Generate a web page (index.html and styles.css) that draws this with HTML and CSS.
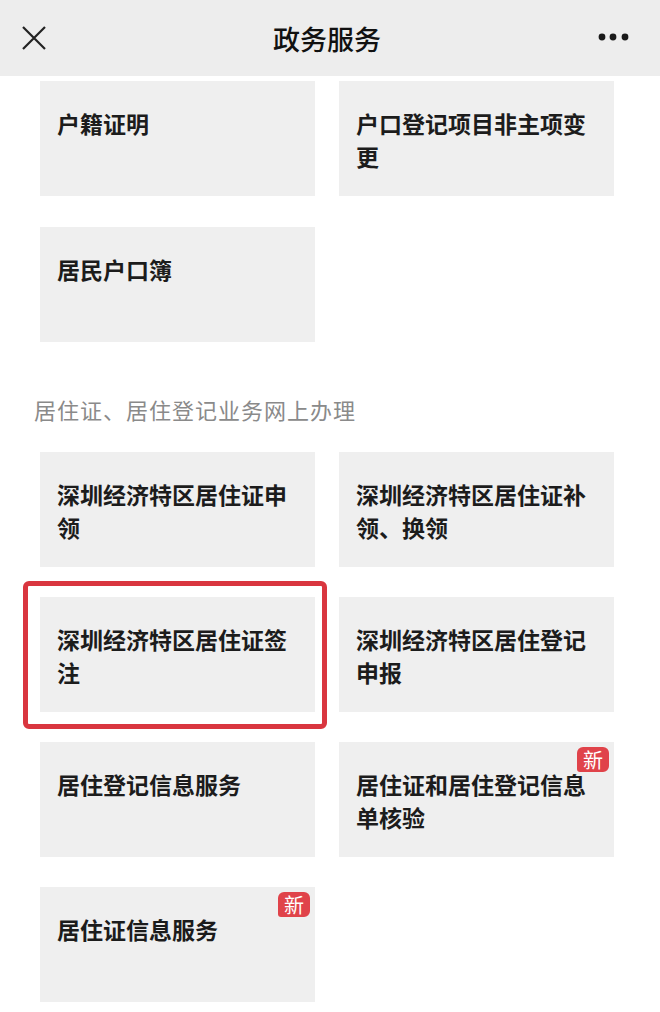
FILE: index.html
```html
<!DOCTYPE html>
<html lang="zh-CN">
<head>
<meta charset="utf-8">
<title>政务服务</title>
<link rel="stylesheet" href="styles.css">
</head>
<body>
<header class="topbar">
  <svg class="close" width="26" height="26" viewBox="0 0 26 26"><path d="M2 2 L24 24 M24 2 L2 24" stroke="#222" stroke-width="2.2" fill="none"/></svg>
  <h1 class="title">政务服务</h1>
  <svg class="more" width="34" height="10" viewBox="0 0 34 10"><circle cx="4" cy="5" r="3.4" fill="#1a1a1a"/><circle cx="15" cy="5" r="3.4" fill="#1a1a1a"/><circle cx="27" cy="5" r="3.4" fill="#1a1a1a"/></svg>
</header>
<main class="content">
  <div class="grid first">
    <div class="card">户籍证明</div>
    <div class="card">户口登记项目非主项变更</div>
    <div class="card">居民户口簿</div>
  </div>
  <h2 class="section">居住证、居住登记业务网上办理</h2>
  <div class="grid">
    <div class="card">深圳经济特区居住证申领</div>
    <div class="card">深圳经济特区居住证补领、换领</div>
    <div class="card highlighted">深圳经济特区居住证签注</div>
    <div class="card">深圳经济特区居住登记申报</div>
    <div class="card">居住登记信息服务</div>
    <div class="card">居住证和居住登记信息单核验<span class="badge">新</span></div>
    <div class="card">居住证信息服务<span class="badge">新</span></div>
  </div>
</main>
</body>
</html>
```
FILE: styles.css
```css
* { box-sizing: border-box; }
body {
  margin: 0;
  background: #ffffff;
  font-family: "Noto Sans CJK SC", "Noto Sans", sans-serif;
  color: #1a1a1a;
  width: 660px;
  overflow: hidden;
}
.topbar {
  height: 76px;
  background: #ededed;
  display: flex;
  align-items: center;
  justify-content: space-between;
  padding: 0 28px 0 21px;
  position: relative;
}
.close { display: block; }
.more { display: block; margin-top: -2px; }
.title {
  position: absolute;
  left: 0;
  right: 6px;
  text-align: center;
  margin: 0;
  font-size: 27px;
  font-weight: 500;
  color: #111111;
  pointer-events: none;
}
.content {
  padding: 5px 46px 0 40px;
}
.grid {
  display: grid;
  grid-template-columns: 275px 275px;
  column-gap: 24px;
  row-gap: 30px;
}
.card {
  position: relative;
  height: 115px;
  background: #efefef;
  padding: 26px 25px 0 17px;
  font-size: 23px;
  line-height: 33px;
  font-weight: 700;
  color: #1c1c1c;
}
.first { row-gap: 31px; }
.section {
  margin: 51px 0 26px -6px;
  font-size: 22px;
  line-height: 33px;
  font-weight: 400;
  color: #8a8a8a;
  letter-spacing: 1px;
}
.highlighted::after {
  content: "";
  position: absolute;
  top: -16px;
  left: -17px;
  right: -12px;
  bottom: -17px;
  border: 5px solid #d9363f;
  border-radius: 6px;
}
.badge {
  position: absolute;
  top: 5px;
  right: 5px;
  width: 32px;
  height: 25px;
  background: #e0434a;
  color: #ffffff;
  border-radius: 6px 6px 6px 3px;
  font-size: 20px;
  line-height: 25px;
  font-weight: 400;
  text-align: center;
}
```
